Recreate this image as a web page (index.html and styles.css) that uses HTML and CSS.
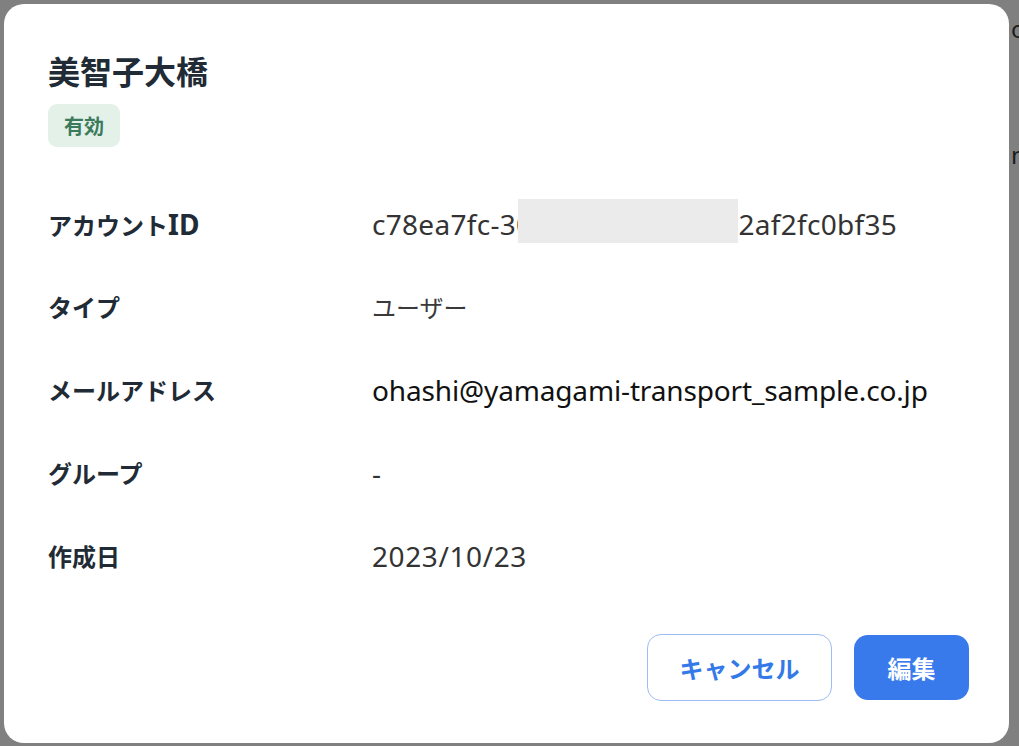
FILE: index.html
```html
<!DOCTYPE html>
<html lang="ja">
<head>
<meta charset="utf-8">
<title>アカウント詳細</title>
<link rel="stylesheet" href="styles.css">
</head>
<body>
<div class="page">
  <span class="page-line page-line-1">o</span>
  <span class="page-line page-line-2">n</span>
</div>
<div class="modal" role="dialog" aria-labelledby="modal-title">
  <header class="modal-head">
    <h1 class="modal-title" id="modal-title">美智子大橋</h1>
    <span class="badge">有効</span>
  </header>
  <dl class="details">
    <div class="row">
      <dt class="label">アカウント<span class="latin">ID</span></dt>
      <dd class="value">c78ea7fc-30<span class="redact"></span>2af2fc0bf35</dd>
    </div>
    <div class="row">
      <dt class="label">タイプ</dt>
      <dd class="value value-ja">ユーザー</dd>
    </div>
    <div class="row">
      <dt class="label">メールアドレス</dt>
      <dd class="value value-strong">ohashi@yamagami-transport_sample.co.jp</dd>
    </div>
    <div class="row">
      <dt class="label">グループ</dt>
      <dd class="value">-</dd>
    </div>
    <div class="row">
      <dt class="label">作成日</dt>
      <dd class="value value-date">2023/10/23</dd>
    </div>
  </dl>
  <footer class="modal-foot">
    <button class="btn btn-outline" type="button">キャンセル</button>
    <button class="btn btn-primary" type="button">編集</button>
  </footer>
</div>
</body>
</html>
```

FILE: styles.css
```css
* {
  box-sizing: border-box;
}

html, body {
  margin: 0;
  padding: 0;
  width: 1019px;
  height: 746px;
  overflow: hidden;
}

body {
  background: #808080;
  font-family: "Noto Sans CJK JP", "Noto Sans", sans-serif;
  position: relative;
}

.page {
  display: flex;
  flex-direction: column;
  padding: 13px 0 0 1011px;
  color: #1c1c1c;
  font-family: "Noto Sans", sans-serif;
  font-size: 24px;
  line-height: 32px;
}

.page-line-2 {
  margin-top: 94px;
}

.modal {
  position: absolute;
  left: 4px;
  top: 4px;
  width: 1005px;
  height: 739px;
  background: #ffffff;
  border-radius: 20px;
  padding: 50px 40px 42px 44px;
  display: flex;
  flex-direction: column;
}

.modal-head {
  display: flex;
  flex-direction: column;
  align-items: flex-start;
}

.modal-title {
  margin: 0;
  font-size: 32px;
  line-height: 32px;
  font-weight: 700;
  color: #212b36;
}

.badge {
  margin-top: 18px;
  height: 43px;
  padding: 0 16px;
  display: inline-flex;
  align-items: center;
  border-radius: 9px;
  background: #e3f1e9;
  color: #3b7a5a;
  font-size: 20px;
  font-weight: 700;
}

.details {
  margin: 55px 0 0;
  display: flex;
  flex-direction: column;
  gap: 39px;
}

.row {
  display: flex;
  align-items: center;
  height: 44px;
}

.label {
  width: 324px;
  flex: none;
  margin: 0;
  font-size: 24px;
  line-height: 44px;
  font-weight: 700;
  color: #212b36;
}

.latin {
  font-family: "Noto Sans", sans-serif;
  font-size: 28px;
}

.value {
  margin: 0;
  font-family: "Noto Sans", "Noto Sans CJK JP", sans-serif;
  font-size: 28px;
  line-height: 44px;
  letter-spacing: 0.3px;
  color: #333333;
  white-space: nowrap;
}

.value-ja {
  font-family: "Noto Sans CJK JP", sans-serif;
  font-size: 24px;
  letter-spacing: 0;
  color: #3a3a3a;
}

.value-strong {
  letter-spacing: -0.15px;
  color: #111111;
}

.value-date {
  letter-spacing: 0.6px;
}

.redact {
  display: inline-block;
  width: 220px;
  height: 44px;
  margin-left: -14px;
  vertical-align: top;
  position: relative;
  top: -3px;
  background: #ebebeb;
}

.modal-foot {
  margin-top: auto;
  display: flex;
  justify-content: flex-end;
  align-items: center;
  gap: 22px;
}

.btn {
  font-family: "Noto Sans CJK JP", sans-serif;
  font-size: 24px;
  font-weight: 700;
  border-radius: 14px;
  display: inline-flex;
  align-items: center;
  justify-content: center;
  padding: 0;
  cursor: pointer;
}

.btn-outline {
  width: 185px;
  height: 67px;
  background: #ffffff;
  border: 1px solid #9bbcf4;
  color: #3479e8;
}

.btn-primary {
  width: 115px;
  height: 65px;
  background: #3879eb;
  border: none;
  color: #ffffff;
}
```
